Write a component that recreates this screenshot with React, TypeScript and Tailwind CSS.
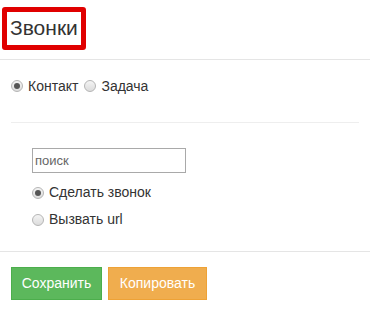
import { useState } from 'react';

function Radio({ checked, label, onClick }: { checked: boolean; label: string; onClick: () => void }) {
  return (
    <label className="flex items-center gap-[5px] cursor-pointer" onClick={onClick}>
      <span className="w-[12px] h-[12px] rounded-full border border-[#b5b5b5] bg-gradient-to-b from-[#f4f4f4] to-[#dcdcdc] flex items-center justify-center">
        {checked && <span className="w-[6px] h-[6px] rounded-full bg-[#555]" />}
      </span>
      <span>{label}</span>
    </label>
  );
}

export default function App() {
  const [target, setTarget] = useState('contact');
  const [action, setAction] = useState('call');

  return (
    <div className="w-[370px] h-[315px] bg-white text-[#333] text-[14px] font-['Liberation_Sans',Arial,sans-serif]">
      <div className="h-[60px] border-b border-[#e5e5e5] pt-[7px] pl-[2px]">
        <div className="inline-block border-[5px] border-[#e00000] rounded-[3px] px-[3px] h-[43px] leading-[32px] text-[21px]">
          Звонки
        </div>
      </div>
      <div className="px-[11px]">
        <div className="flex items-center gap-[6px] h-[63px] pb-[10px] border-b border-[#eeeeee]">
          <Radio checked={target === 'contact'} label="Контакт" onClick={() => setTarget('contact')} />
          <Radio checked={target === 'task'} label="Задача" onClick={() => setTarget('task')} />
        </div>
        <div className="pl-[21px] pt-[25px] h-[128px]">
          <input
            placeholder="поиск"
            className="block w-[154px] h-[25px] border border-[#a9a9a9] px-[2px] text-[13px] placeholder:text-[#666] outline-none"
          />
          <div className="flex flex-col gap-[6px] mt-[9px]">
            <Radio checked={action === 'call'} label="Сделать звонок" onClick={() => setAction('call')} />
            <Radio checked={action === 'url'} label="Вызвать url" onClick={() => setAction('url')} />
          </div>
        </div>
      </div>
      <div className="border-t border-[#e5e5e5] px-[11px] pt-[15px] flex gap-[6px]">
        <button className="w-[91px] h-[33px] bg-[#5cb85c] border border-[#4cae4c] text-white">Сохранить</button>
        <button className="w-[99px] h-[33px] bg-[#f0ad4e] border border-[#eea236] text-white">Копировать</button>
      </div>
    </div>
  );
}
